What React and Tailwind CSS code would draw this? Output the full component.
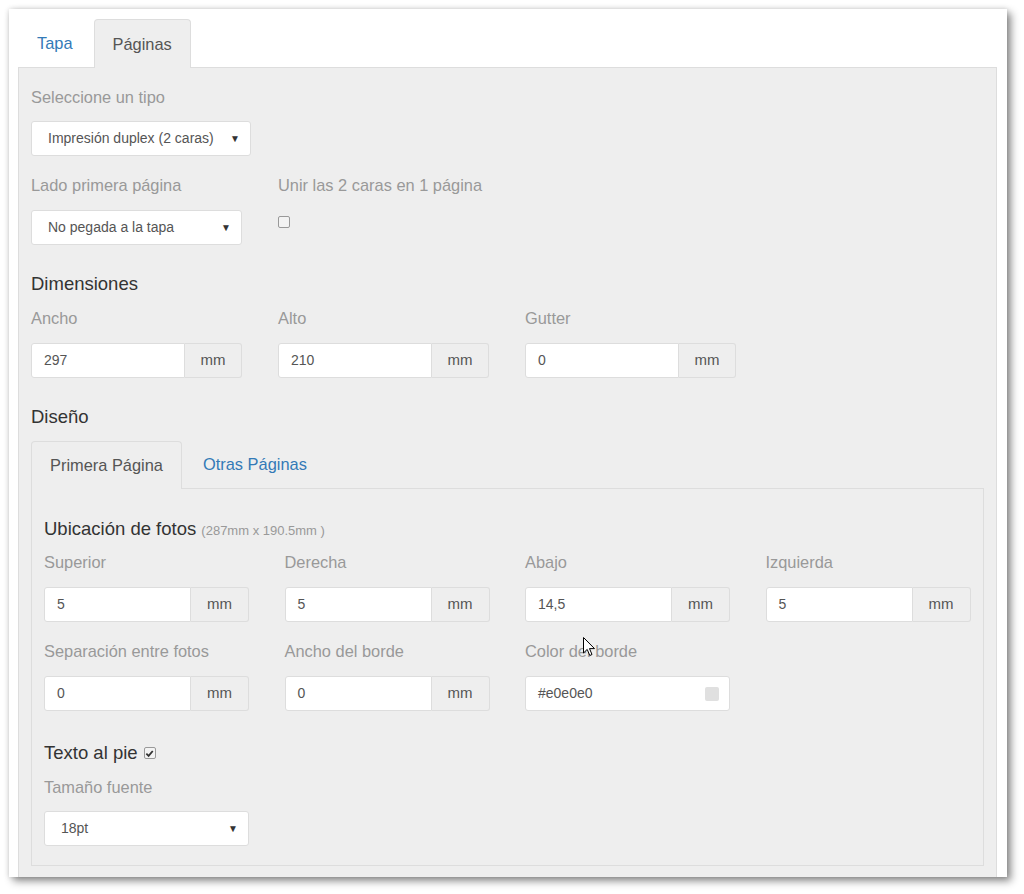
import React from "react";

const Label = ({ children, className = "" }) => (
  <div className={"h-[20px] text-[16.4px] leading-[20px] text-[#999] whitespace-nowrap " + className}>{children}</div>
);

const Select = ({ value, w, className = "" }) => (
  <div
    className={"h-[35px] bg-white border border-[#ddd] rounded-[3px] flex items-center justify-between pl-[16px] pr-[10px] text-[14px] text-[#555] " + className}
    style={{ width: w }}
  >
    <span>{value}</span>
    <span className="text-[10px] text-[#333]">▼</span>
  </div>
);

const InputGroup = ({ value, w, addonW = 57, className = "" }) => (
  <div className={"h-[35px] flex " + className} style={{ width: w }}>
    <div className="flex-1 bg-white border border-[#ddd] rounded-l-[3px] flex items-center pl-[12px] text-[14px] text-[#555]">
      {value}
    </div>
    <div
      className="bg-[#eee] border border-l-0 border-[#ddd] rounded-r-[3px] flex items-center justify-center text-[15px] text-[#555]"
      style={{ width: addonW }}
    >
      mm
    </div>
  </div>
);

const Field = ({ label, children, w }) => (
  <div style={{ width: w }}>
    <Label className="mb-[15px]">{label}</Label>
    {children}
  </div>
);

const Heading = ({ children, className = "" }) => (
  <div className={"h-[24px] text-[18.5px] leading-[24px] text-[#333] whitespace-nowrap " + className}>{children}</div>
);

export default function App() {
  return (
    <div className="relative w-[1024px] h-[894px] bg-white pt-[9px] pl-[9px] font-['Liberation_Sans',Arial,sans-serif] overflow-hidden">
      <div className="w-[998px] h-[868px] bg-white overflow-hidden pt-[10px] pl-[9px] pr-[10px] flex flex-col shadow-[4px_4px_8px_rgba(0,0,0,0.45),0_0_5px_rgba(0,0,0,0.15)]">
        {/* top tabs */}
        <div className="flex h-[48px] shrink-0">
          <div className="h-[48px] px-[19px] mr-[2px] flex items-center text-[16.4px] text-[#337ab7]">Tapa</div>
          <div className="relative z-10 h-[49px] px-[18px] flex items-center text-[16.4px] text-[#555] bg-[#eee] border border-[#ddd] border-b-0 rounded-t-[4px]">
            Páginas
          </div>
        </div>

        {/* outer panel */}
        <div className="bg-[#eee] border border-[#ddd] pl-[12px] pr-[12px] pt-[19px] pb-[20px] shrink-0">
          <Label className="mb-[14px]">Seleccione un tipo</Label>
          <Select value="Impresión duplex (2 caras)" w={220} />

          <div className="flex gap-[36px] mt-[19px]">
            <Field label="Lado primera página" w={211}>
              <Select value="No pegada a la tapa" w={211} />
            </Field>
            <Field label="Unir las 2 caras en 1 página" w={211}>
              <div className="mt-[21px] w-[12px] h-[12px] border border-[#999] rounded-[2px] bg-[#f3f3f3]" />
            </Field>
          </div>

          <Heading className="mt-[27px]">Dimensiones</Heading>
          <div className="flex gap-[36px] mt-[12px]">
            <Field label="Ancho" w={211}>
              <InputGroup value="297" w={211} />
            </Field>
            <Field label="Alto" w={211}>
              <InputGroup value="210" w={211} />
            </Field>
            <Field label="Gutter" w={211}>
              <InputGroup value="0" w={211} />
            </Field>
          </div>

          <Heading className="mt-[27px]">Diseño</Heading>

          {/* inner tabs */}
          <div className="flex h-[47px] mt-[12px]">
            <div className="relative z-10 h-[48px] px-[18px] mr-[2px] flex items-center text-[16.4px] text-[#555] bg-[#eee] border border-[#ddd] border-b-0 rounded-t-[4px]">
              Primera Página
            </div>
            <div className="h-[47px] px-[19px] flex items-center text-[16.4px] text-[#337ab7]">Otras Páginas</div>
          </div>

          <div className="bg-[#eee] border border-[#ddd] pl-[12px] pr-[12px] pt-[28px] pb-[19px]">
            <Heading>
              Ubicación de fotos <span className="text-[13px] text-[#999]">(287mm x 190.5mm )</span>
            </Heading>

            <div className="grid grid-cols-[repeat(4,205px)] gap-x-[35.5px] mt-[11px]">
              <Field label="Superior">
                <InputGroup value="5" w={205} addonW={58} />
              </Field>
              <Field label="Derecha">
                <InputGroup value="5" w={205} addonW={58} />
              </Field>
              <Field label="Abajo">
                <InputGroup value="14,5" w={205} addonW={58} />
              </Field>
              <Field label="Izquierda">
                <InputGroup value="5" w={205} addonW={58} />
              </Field>
            </div>

            <div className="grid grid-cols-[repeat(4,205px)] gap-x-[35.5px] mt-[19px]">
              <Field label="Separación entre fotos">
                <InputGroup value="0" w={205} addonW={58} />
              </Field>
              <Field label="Ancho del borde">
                <InputGroup value="0" w={205} addonW={58} />
              </Field>
              <Field label="Color del borde">
                <div className="h-[35px] w-[205px] bg-white border border-[#ddd] rounded-[3px] flex items-center justify-between pl-[12px] pr-[10px] text-[14px] text-[#555]">
                  <span>#e0e0e0</span>
                  <span className="w-[14px] h-[14px] rounded-[2px] bg-[#e0e0e0]" />
                </div>
              </Field>
            </div>

            <Heading className="mt-[30px] flex items-center">
              Texto al pie
              <span className="ml-[6px] w-[12px] h-[12px] border border-[#999] rounded-[2px] bg-[#f3f3f3] flex items-center justify-center">
                <svg width="9" height="9" viewBox="0 0 10 10">
                  <path d="M1.5 5.2 L4 7.6 L8.6 2.2" fill="none" stroke="#333" strokeWidth="2" />
                </svg>
              </span>
            </Heading>
            <Label className="mt-[12px] mb-[14px]">Tamaño fuente</Label>
            <Select value="18pt" w={205} />
          </div>
        </div>
      </div>

      {/* mouse cursor */}
      <svg className="absolute left-[583px] top-[637px]" width="13" height="20" viewBox="0 0 13 20">
        <path d="M0.5 0.5 L0.5 16 L4.2 12.4 L6.8 18.5 L9 17.5 L6.5 11.6 L11.5 11.6 Z" fill="white" stroke="black" strokeWidth="1" strokeLinejoin="round" />
      </svg>
    </div>
  );
}
